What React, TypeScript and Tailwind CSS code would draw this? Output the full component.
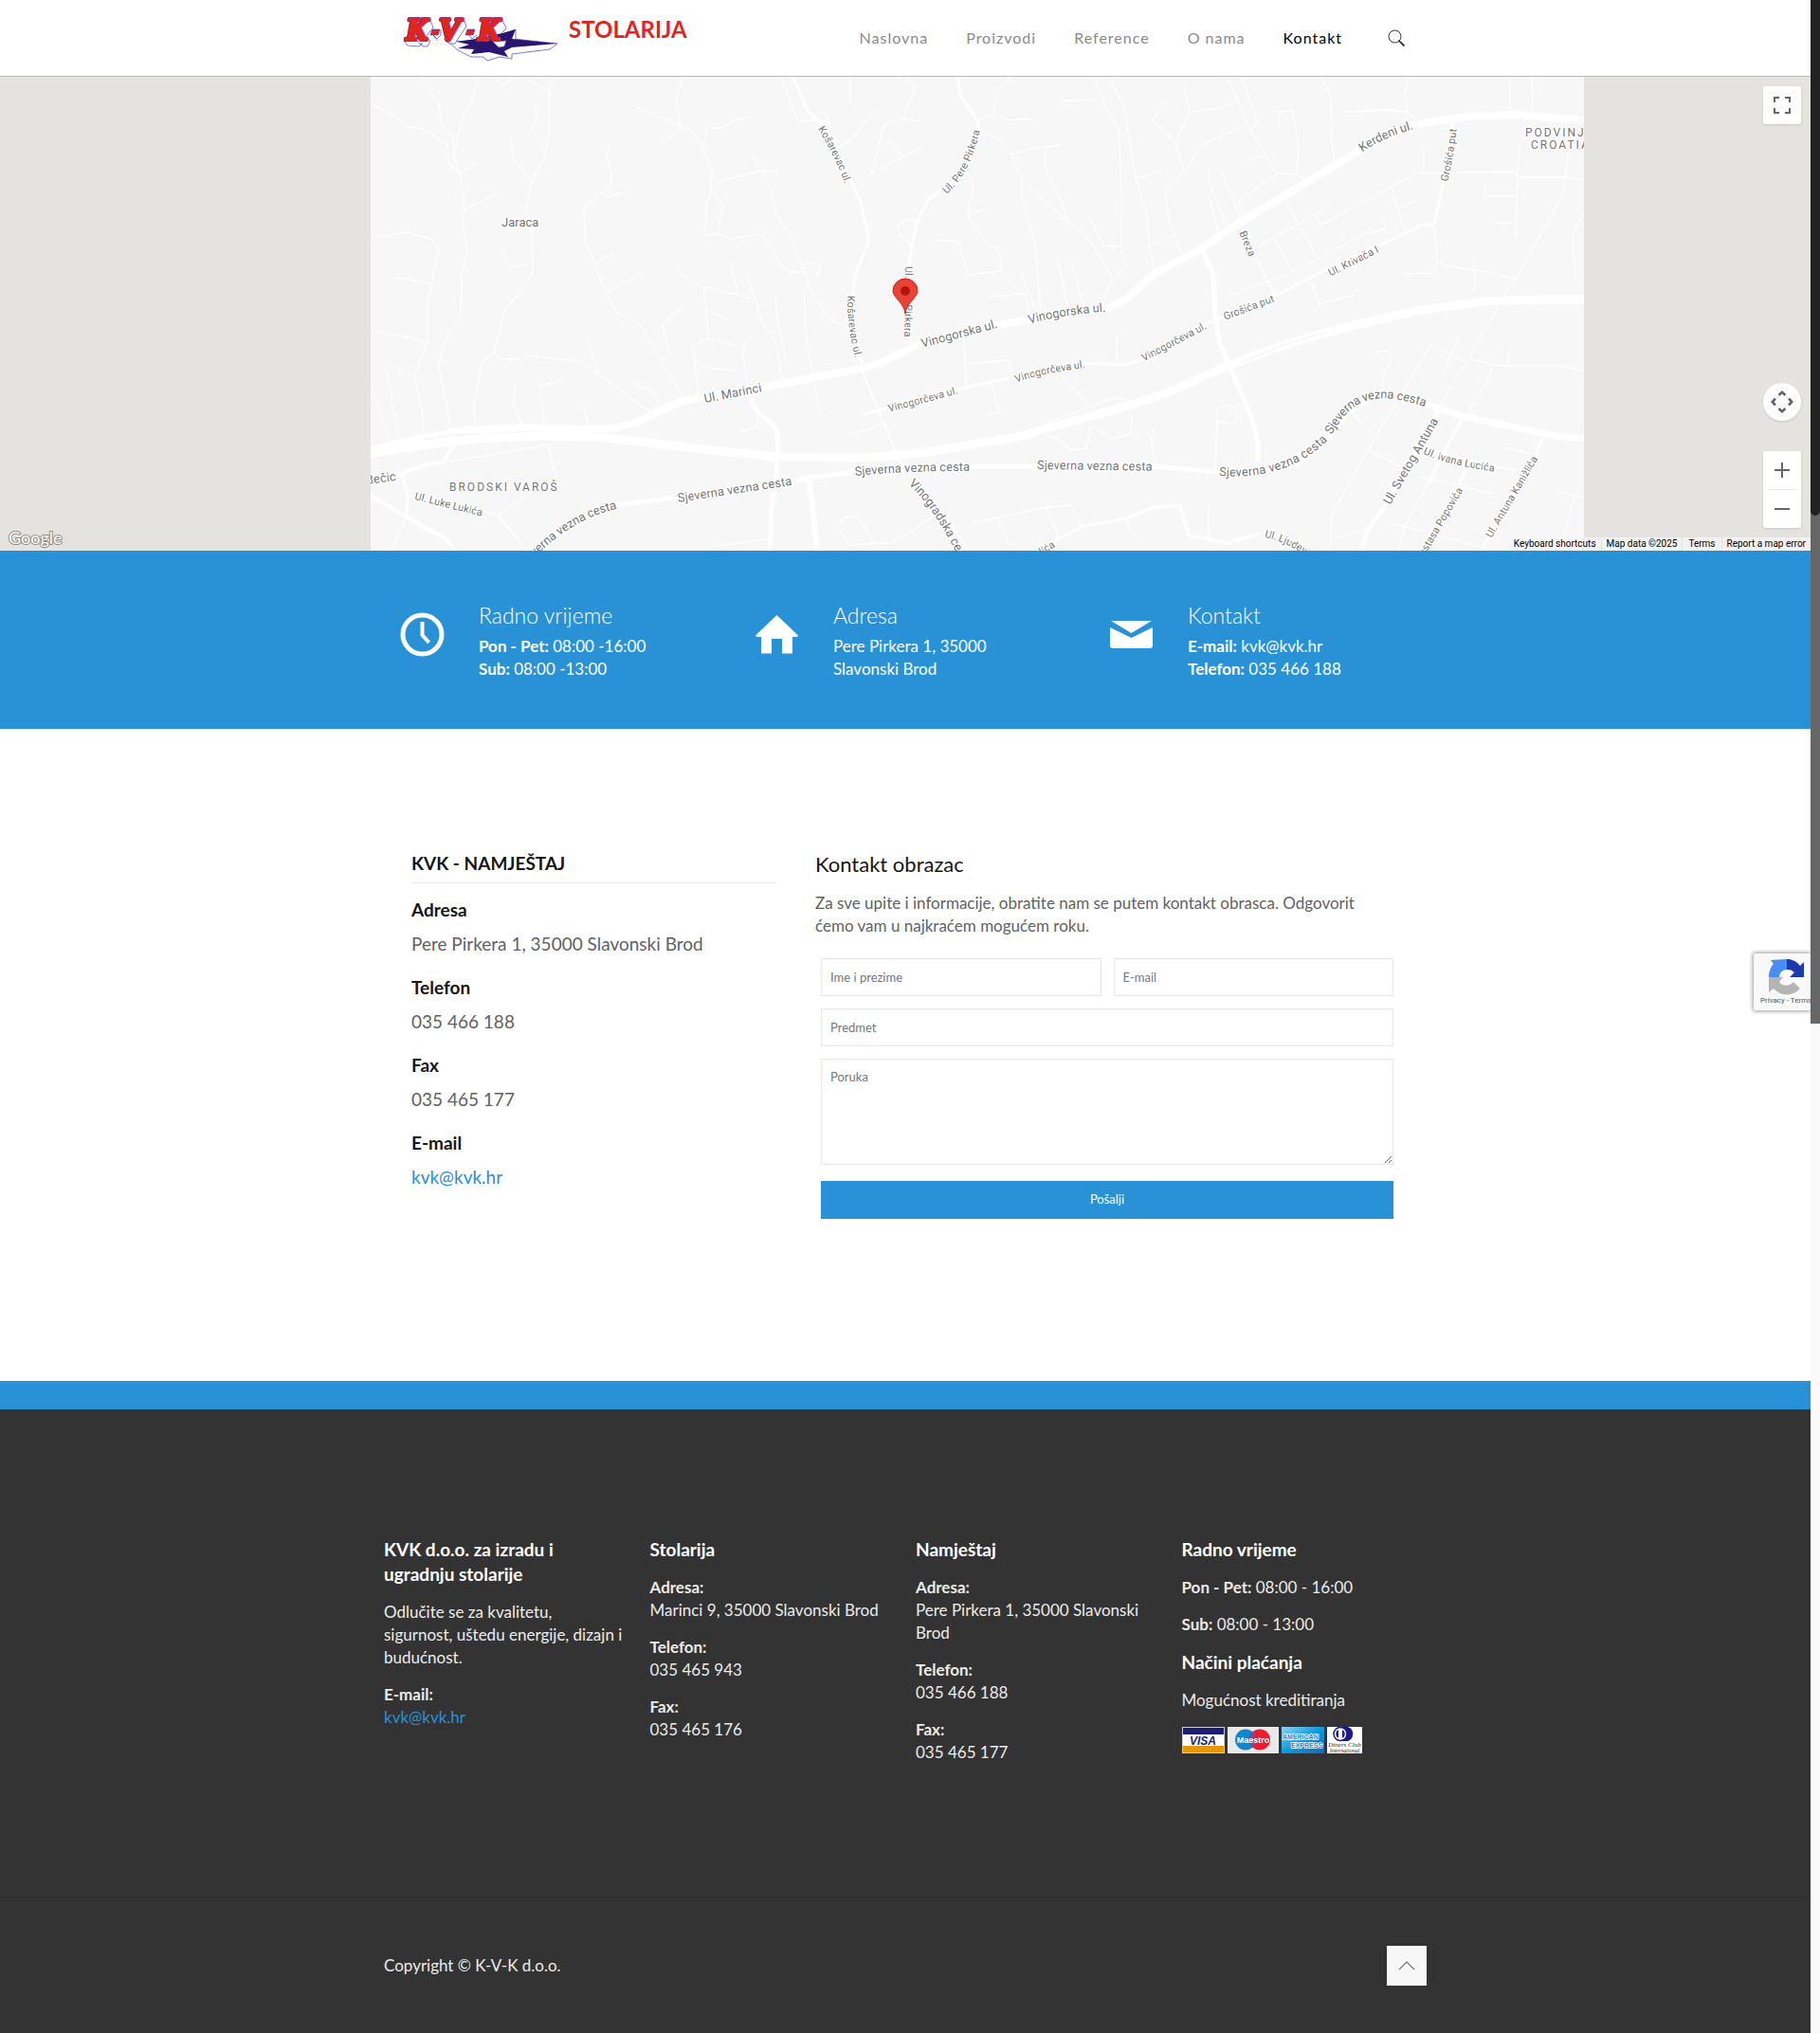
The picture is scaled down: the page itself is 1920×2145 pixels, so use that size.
import { ReactNode } from 'react';

const navItems = [
  { label: 'Naslovna', href: '#naslovna' },
  { label: 'Proizvodi', href: '#proizvodi' },
  { label: 'Reference', href: '#reference' },
  { label: 'O nama', href: '#o-nama' },
  { label: 'Kontakt', href: '#kontakt', active: true },
];

// [stroke width, polyline points]
const mainRoads: [number, string][] = [
  [8, '390,475 447,462 492,454 553,451 610,453 647,452 674,445 696,433 720,423 745,419 804,409 912,388 929,383 970,363 1052,343 1087,337 1169,325 1186,317 1219,288 1268,262 1304,237 1354,207 1411,173 1435,158 1490,132 1533,125 1560,122 1600,121 1633,124 1671,127'],
  [9, '390,479 443,470 500,463 574,460 643,462 725,472 819,482 908,483 974,478 1030,468 1074,461 1104,452 1191,428 1230,415 1295,386 1360,362 1421,345 1494,328 1564,318 1624,316 1671,316'],
  [5, '565,582 590,560 620,545 651,533 717,524 839,507 855,504 900,498 1027,492 1095,492 1217,492 1286,498 1330,498 1373,487 1403,460 1425,433 1455,417 1499,425'],
  [7, '1499,425 1546,440 1642,460 1671,463'],
  [5, '792,422 798,433 819,452 821,467 819,500 814,533 812,582'],
  [6, '853,503 857,533 862,582'],
  [5, '1268,262 1280,290 1282,330 1286,360 1299,390 1321,443 1327,467 1327,497'],
  [3, '837,82 851,115 868,133 896,187 908,213 917,253 902,290 898,330 906,373 911,388'],
  [2, '910,393 949,487 974,520 1002,553 1023,582'],
  [3, '1010,82 1013,100 1031,127 1033,137 1019,180 980,210 968,232 962,260 958,283 957,330 960,360'],
  [2, '968,232 957,232 947,238 949,247 962,260'],
  [3, '912,437 937,430 1000,413 1069,398 1143,383 1186,385 1204,380 1273,342 1282,337 1345,312 1398,285 1459,257 1502,237 1513,237 1523,190 1533,130'],
  [2, '1306,238 1325,270 1345,312'],
  [5, '1518,433 1490,483 1464,530 1442,560 1436,582'],
  [3, '1542,443 1520,483 1508,508'],
  [3, '1546,497 1529,533 1499,582'],
  [3, '1629,460 1620,480 1572,563 1562,582'],
  [2, '1503,473 1581,493 1611,498'],
  [4, '390,508 423,500 450,490 468,487 478,470 476,453'],
  [3, '423,500 430,520 429,545'],
  [4, '390,522 431,547 468,567 482,582'],
  [2, '431,523 525,543 557,582'],
  [3, '1091,582 1143,555 1189,547 1217,535 1245,533 1254,565 1295,573 1332,562 1377,582'],
];

const sideStreets = [
  '445,82 463,110 465,127 478,147 479,167 485,183 490,222 488,233 493,267 487,287 486,333 468,363 463,387 476,452',
  '390,108 421,125 429,133 447,137 472,153 474,173 485,183',
  '505,82 497,107 490,120 484,140 478,167',
  '580,82 579,143 574,167 561,190 555,222 561,240 562,287 552,303 531,330 528,347 521,372 508,383 500,427 501,450',
  '565,113 566,125 561,137 574,158',
  '539,145 541,167 561,190',
  '390,251 429,245 455,252 463,262 457,290 451,323 451,360 437,397 445,433 447,457',
  '417,293 456,299',
  '485,183 503,173',
  '490,222 524,203',
  '532,266 537,283 553,279',
  '524,82 530,91 540,82',
  '554,82 579,97',
  '719,82 713,107 718,133 729,138 741,155 751,182 750,200 763,217 757,247 772,252 802,247 812,257 823,280 833,287 849,287',
  '671,113 718,133 698,153',
  '741,155 746,135 761,135 775,127 790,123',
  '643,152 640,163 646,190 635,203 616,220 617,253 629,282 639,310 651,330 676,343 694,375 717,413',
  '635,203 639,208 660,203',
  '629,282 635,273 649,267',
  '639,310 678,287',
  '751,182 759,191 802,180 821,181',
  '794,164 814,203 819,227 835,250 849,287 855,307 870,330 880,340 894,345',
  '750,200 745,217 744,249 757,247',
  '849,278 862,278 865,284 861,294',
  '825,82 841,127 849,128 859,126 875,130 870,117',
  '957,82 965,93 953,125 932,132 921,180 906,202',
  '970,128 953,125',
  '921,118 898,147 884,157',
  '921,182 953,165 977,153',
  '953,165 940,150',
  '897,82 897,107',
  '712,279 721,292 743,303 778,311 797,316',
  '771,279 778,311',
  '787,287 797,316 804,340 819,363 825,400',
  '743,303 747,357 731,365 737,417',
  '745,327 768,337',
  '747,357 775,364',
  '732,380 748,388 780,391',
  '718,324 699,343 707,375 697,380',
  '786,363 783,372 792,422',
  '818,313 820,335 829,385',
  '848,313 851,360 865,437',
  '521,372 531,379 547,379 557,375 610,381 631,393 672,425 684,433',
  '619,357 631,393',
  '592,402 569,407 574,447',
  '544,407 541,425 550,447',
  '390,403 410,463',
  '407,387 412,413 420,460',
  '390,349 437,357 451,363',
  '421,390 437,397',
  '472,487 517,480 578,469 586,503',
  '525,543 560,520',
  '799,433 799,450 781,455',
  '670,404 676,409 688,412 696,427',
  '608,432 616,430 621,449',
  '412,582 429,545',
  '896,458 916,453 933,446',
  '750,577 807,569',
  '884,557 890,546 903,545 912,555 921,573 898,576 884,557',
  '921,573 940,573 962,560 988,542',
  '1066,82 1053,93 1048,120 1031,128',
  '1048,120 1066,127 1082,125 1090,127',
  '1033,137 1055,147 1067,163 1078,190 1078,210 1092,257 1098,330',
  '1067,163 1088,157 1119,153',
  '1102,155 1104,180 1119,210 1127,233 1114,229',
  '1086,198 1127,233 1149,253 1174,293',
  '1019,180 1027,197 1021,227 1037,253 1055,267 1057,287 1084,317 1086,330',
  '1021,227 1040,220',
  '986,253 1011,255 1021,290 1057,286',
  '1047,313 1084,309',
  '1078,290 1092,325',
  '1116,274 1127,327',
  '1130,276 1144,325',
  '1119,107 1151,105 1166,112 1180,137 1184,220 1182,260 1188,280 1170,300 1164,320',
  '1150,230 1164,259 1182,260',
  '1155,82 1166,112',
  '1170,82 1186,113 1198,188 1210,227 1213,263 1219,287',
  '1198,188 1225,181',
  '1210,260 1239,248',
  '1306,106 1284,114 1255,118 1240,150 1249,180 1257,170 1268,153 1317,130',
  '1249,90 1255,118',
  '1240,150 1216,126 1230,108',
  '1249,180 1229,200 1233,230 1245,265',
  '1294,82 1306,106 1321,140 1347,183 1370,184 1377,192',
  '1310,82 1327,128 1321,135',
  '1312,171 1333,164',
  '1347,183 1306,212 1318,235',
  '1349,132 1349,118 1364,117 1370,157 1368,184',
  '1394,82 1404,100 1405,147 1408,170',
  '1276,177 1276,193 1292,233',
  '1289,182 1309,230',
  '1277,213 1286,247',
  '1357,212 1390,273',
  '1345,253 1363,286',
  '1327,260 1402,218',
  '1386,227 1394,237 1468,197 1492,183 1520,182 1597,181 1601,187 1599,250',
  '1468,197 1482,247',
  '1475,219 1493,212',
  '1296,312 1359,289 1440,247 1462,241 1458,230',
  '1384,298 1391,321 1429,311',
  '1655,157 1649,205 1600,293 1580,323 1547,383 1533,403 1517,433',
  '1603,157 1600,187 1652,187 1671,189',
  '1513,237 1516,277 1512,288 1480,289',
  '1516,277 1540,283 1567,287 1600,295',
  '1555,272 1556,306',
  '1567,193 1566,207 1600,207',
  '1578,235 1599,235',
  '1547,383 1510,363 1480,413 1443,475 1405,542 1403,582',
  '1448,372 1465,370 1467,380 1458,400 1458,412',
  '1553,379 1575,385 1590,386 1647,386 1671,392',
  '1590,386 1593,369',
  '1575,385 1570,400 1550,433',
  '1540,352 1520,400',
  '1420,118 1460,116 1485,118 1482,100 1485,82',
  '1485,118 1494,126',
  '1593,82 1593,120',
  '1616,82 1617,121',
  '1502,155 1502,182',
  '1498,503 1575,521',
  '1587,472 1615,479',
  '1443,475 1490,498',
  '1508,507 1483,553 1475,582',
  '1468,552 1567,578',
  '1403,570 1440,558',
  '1671,225 1659,247 1662,293',
  '1646,519 1671,525',
  '1661,523 1650,567',
  '1217,454 1215,467 1219,487',
  '1282,497 1284,433 1293,427 1304,430 1304,447 1284,445',
  '1104,460 1115,462 1130,475 1145,473 1152,450 1173,463 1193,458 1195,440',
  '1104,446 1175,420 1190,422',
  '1026,552 1100,536 1130,533 1141,555',
  '1052,547 1069,582',
  '1104,535 1117,567',
  '1017,357 1019,408',
  '1019,384 1065,380 1068,398',
  '1117,393 1143,421',
  '1046,405 1054,434 1039,439',
  '1178,355 1178,385',
  '1189,547 1191,560 1199,566',
  '1275,535 1275,570',
  '1425,433 1437,447',
];

type MapLabel = { id: string; text: string; d: string; size: number; end?: boolean };

const streetLabels: MapLabel[] = [
  { id: 'kosarevac-1', text: 'Košarevac ul.', d: 'M866,134 Q886,164 899,204', size: 11 },
  { id: 'kosarevac-2', text: 'Košarevac ul.', d: 'M898,312 Q897,345 910,394', size: 11 },
  { id: 'pirkera-1', text: 'Ul. Pere Pirkera', d: 'M996,202 Q1024,178 1033,120', size: 11 },
  { id: 'pirkera-2', text: 'Ul. Pere Pirkera', d: 'M959,281 L958,380', size: 11 },
  { id: 'kerdeni', text: 'Kerdeni ul.', d: 'M1435,157 Q1462,138 1510,127', size: 13 },
  { id: 'grosica-1', text: 'Grošića put', d: 'M1523,191 Q1531,160 1534,120', size: 11 },
  { id: 'breza', text: 'Breza', d: 'M1311,244 L1330,290', size: 11 },
  { id: 'krivaca', text: 'Ul. Krivača I', d: 'M1402,288 L1470,254', size: 11 },
  { id: 'grosica-2', text: 'Grošića put', d: 'M1291,334 L1360,308', size: 11 },
  { id: 'vinogorceva-1', text: 'Vinogorčeva ul.', d: 'M937,431 L1030,406', size: 11 },
  { id: 'vinogorceva-2', text: 'Vinogorčeva ul.', d: 'M1071,400 Q1100,388 1165,382', size: 11 },
  { id: 'vinogorceva-3', text: 'Vinogorčeva ul.', d: 'M1205,378 L1290,333', size: 11 },
  { id: 'vinogorska-1', text: 'Vinogorska ul.', d: 'M972,363 L1070,337', size: 13 },
  { id: 'vinogorska-2', text: 'Vinogorska ul.', d: 'M1085,338 Q1120,327 1190,323', size: 13 },
  { id: 'marinci', text: 'Ul. Marinci', d: 'M743,421 L830,404', size: 13 },
  { id: 'sjeverna-1', text: 'Sjeverna vezna cesta', d: 'M532,620 Q585,547 650,533', size: 13, end: true },
  { id: 'sjeverna-2', text: 'Sjeverna vezna cesta', d: 'M715,526 L860,504', size: 13 },
  { id: 'sjeverna-3', text: 'Sjeverna vezna cesta', d: 'M902,498 Q960,492 1050,493', size: 13 },
  { id: 'sjeverna-4', text: 'Sjeverna vezna cesta', d: 'M1094,491 L1240,493', size: 13 },
  { id: 'sjeverna-5', text: 'Sjeverna vezna cesta', d: 'M1286,498 C1340,502 1380,485 1408,450', size: 13 },
  { id: 'sjeverna-6', text: 'Sjeverna vezna cesta', d: 'M1401,457 C1425,415 1450,404 1520,431', size: 13 },
  { id: 'svetog', text: 'Ul. Svetog Antuna', d: 'M1463,531 L1525,423', size: 13 },
  { id: 'lucica', text: 'Ul. Ivana Lucića', d: 'M1503,475 Q1525,487 1600,497', size: 11 },
  { id: 'popovica', text: 'Anastasa Popovića', d: 'M1486,608 L1540,515', size: 11, end: true },
  { id: 'kanizlica', text: 'Ul. Antuna Kanižlića', d: 'M1570,566 L1630,463', size: 11 },
  { id: 'ljudevita', text: 'Ul. Ljudevita', d: 'M1335,563 Q1358,567 1395,592', size: 11 },
  { id: 'dica', text: 'dića', d: 'M1094,584 L1125,565', size: 11 },
  { id: 'vinogradska', text: 'Vinogradska cesta', d: 'M961,508 Q996,540 1024,608', size: 13 },
  { id: 'lukica', text: 'Ul. Luke Lukića', d: 'M438,523 L530,546', size: 11 },
  { id: 'becic', text: 'Bečic', d: 'M386,507 L440,500', size: 13 },
];

function Logo() {
  return (
    <svg width="166" height="48" viewBox="0 0 166 48" role="img" aria-label="K-V-K" className="overflow-visible">
      <g fill="#fff" stroke="#5555dd" strokeWidth="0.8" strokeLinejoin="round">
        <path d="M48 28l10 9 14 7 13 0 4 4 13-4 13 2v-5l40-5 8-6-46-5z" />
        <path d="M119 15v12l-14-7z" />
        <path d="M28 3l4 10-8 10 5 4-3 6h-5l-6-6M1 27l4 5 12 1 4-4" />
        <path d="M31 20l5 5 4-4v-6M64 3l3 9-9 13-3 5h-6l-6-5M69 20l4 5 5-4" />
        <path d="M104 3l5 11-5 5 6 6-2 7h-7l-4-5" />
      </g>
      <path
        d="M57 28l20-3 28-6 14-4-4 10 48 5-48 4-8 4 4 6-20-5-19 2 3-5-17-1 12-4z"
        fill="#2a146e"
      />
      <path d="M32 22l5 5M95 28l6 6 6-1 2-6z" fill="#fff" stroke="#5555dd" strokeWidth="0.6" />
      <g
        fontFamily="'Liberation Serif', serif"
        fontWeight="bold"
        fontStyle="italic"
        fontSize="34"
        fill="#e0251f"
        strokeLinejoin="round"
        paintOrder="stroke"
      >
        <g stroke="#3b3bd0" strokeWidth="4">
          <text x="3" y="26">K</text>
          <text x="38" y="26">V</text>
          <text x="79" y="26">K</text>
        </g>
        <g stroke="#e0251f" strokeWidth="3">
          <text x="3" y="26" aria-hidden="true">K</text>
          <text x="38" y="26" aria-hidden="true">V</text>
          <text x="79" y="26" aria-hidden="true">K</text>
        </g>
      </g>
      <path d="M31 15h8l-2 6h-8zM68 15h8l-2 6h-8z" fill="#e0251f" stroke="#3b3bd0" strokeWidth="0.6" />
    </svg>
  );
}

function Header() {
  return (
    <header className="border-b border-[#b8b8b8] bg-white">
      <div className="mx-auto flex h-20 max-w-[1122px] items-center justify-between pr-[34px] pl-[31px]">
        <a href="#naslovna" className="flex h-12 items-start gap-[9px]">
          <Logo />
          <span className="text-2xl leading-[30px] font-bold text-[#e0251f]">STOLARIJA</span>
        </a>
        <div className="flex items-center gap-12">
          <nav className="flex gap-10 text-base tracking-[1px]">
            {navItems.map((item) => (
              <a key={item.label} href={item.href} className={item.active ? 'text-black' : 'text-[#8a8a8a]'}>
                {item.label}
              </a>
            ))}
          </nav>
          <button type="button" aria-label="Traži">
            <svg width="18" height="18" viewBox="0 0 18 18" fill="none" stroke="#333" className="block">
              <circle cx="7.5" cy="7.5" r="6.5" strokeWidth="1" />
              <path d="M12 12.2l5 4.8" strokeWidth="1.8" strokeLinecap="round" />
            </svg>
          </button>
        </div>
      </div>
    </header>
  );
}

function StreetMap() {
  return (
    <svg width="1280" height="500" viewBox="391 81 1280 500" className="block bg-[#f7f7f7]" aria-label="Karta">
      <g fill="none" stroke="#fff" strokeLinejoin="round" strokeLinecap="round">
        {sideStreets.map((points) => (
          <polyline key={points} points={points} strokeWidth="1.3" />
        ))}
        {mainRoads.map(([width, points]) => (
          <polyline key={points} points={points} strokeWidth={width} />
        ))}
      </g>
      <g fill="none" stroke="#f1f1f1" strokeWidth="1">
        <polyline points="447,464 476,459 500,458" />
        <polyline points="1310,382 1360,362 1400,350" />
      </g>
      <g
        fontFamily="Roboto, sans-serif"
        fill="#757575"
        stroke="#fff"
        strokeWidth="3"
        strokeLinejoin="round"
        paintOrder="stroke"
      >
        {streetLabels.map((label) => (
          <g key={label.id}>
            <path id={label.id} d={label.d} fill="none" stroke="none" />
            <text fontSize={label.size} dy="4">
              <textPath
                href={`#${label.id}`}
                startOffset={label.end ? '100%' : '0'}
                textAnchor={label.end ? 'end' : 'start'}
              >
                {label.text}
              </textPath>
            </text>
          </g>
        ))}
        <text x="529" y="239" fontSize="13">Jaraca</text>
        <g fontSize="12" letterSpacing="2">
          <text x="474" y="518">BRODSKI VAROŠ</text>
          <text x="1609" y="144">PODVINJ</text>
          <text x="1615" y="157">CROATIA</text>
        </g>
      </g>
      <path
        d="M955 331c-1-7-4-10-8-15-3-4-5-6-5-9a13 13 0 0 1 26 0c0 3-2 5-5 9-4 5-7 8-8 15z"
        fill="#ea4335"
        stroke="#c5221f"
        strokeWidth="1"
      />
      <circle cx="955" cy="307" r="5" fill="#b31412" />
    </svg>
  );
}

function MapSection() {
  return (
    <section className="relative h-[500px] overflow-hidden bg-[#e5e3df]">
      <div className="ml-[391px]">
        <StreetMap />
      </div>

      <svg width="62" height="24" viewBox="0 0 62 24" className="absolute bottom-0 left-[7px]" aria-label="Google">
        <text
          x="2"
          y="17"
          fontFamily="Lato, sans-serif"
          fontSize="18"
          fill="#fff"
          stroke="#8a8a8a"
          strokeWidth="2"
          paintOrder="stroke"
        >
          Google
        </text>
      </svg>

      <button
        type="button"
        aria-label="Cijeli zaslon"
        className="absolute top-[10px] right-[10px] flex size-10 items-center justify-center rounded-xs bg-white shadow"
      >
        <svg width="18" height="18" viewBox="0 0 18 18" fill="none" stroke="#666" strokeWidth="2">
          <path d="M1 6V1h5M12 1h5v5M17 12v5h-5M6 17H1v-5" />
        </svg>
      </button>

      <button
        type="button"
        aria-label="Pomakni kartu"
        className="absolute right-[10px] bottom-[137px] flex size-10 items-center justify-center rounded-full bg-white shadow"
      >
        <svg width="24" height="24" viewBox="0 0 24 24" fill="none" stroke="#666" strokeWidth="2.6">
          <path d="M8.5 5L12 1.8 15.5 5M8.5 19l3.500 3.200L15.500 19M5 8.500L1.800 12 5 15.500M19 8.500l3.200 3.500L19 15.500" />
        </svg>
      </button>

      <div className="absolute right-[10px] bottom-6 flex w-10 flex-col rounded-xs bg-white shadow">
        <button type="button" aria-label="Povećaj" className="flex h-10 items-center justify-center">
          <svg width="16" height="16" viewBox="0 0 16 16" stroke="#666" strokeWidth="2">
            <path d="M8 0v16M0 8h16" />
          </svg>
        </button>
        <div className="mx-[5px] h-px bg-[#e6e6e6]" />
        <button type="button" aria-label="Smanji" className="flex h-10 items-center justify-center">
          <svg width="16" height="16" viewBox="0 0 16 16" stroke="#666" strokeWidth="2">
            <path d="M0 8h16" />
          </svg>
        </button>
      </div>

      <div className="absolute right-0 bottom-0 flex h-[14px] divide-x divide-[#e0e0e0] bg-[#f5f5f5]/80 font-[Roboto,sans-serif] text-[10px] leading-[14px] text-black">
        <button type="button" className="px-[5px]">Keyboard shortcuts</button>
        <span className="px-[5px]">Map data ©2025</span>
        <a href="#terms" className="px-[6px]">Terms</a>
        <a href="#report" className="px-[5px]">Report a map error</a>
      </div>
    </section>
  );
}

function InfoItem({ icon, title, children }: { icon: ReactNode; title: string; children: ReactNode }) {
  return (
    <div className="flex pl-7">
      <div className="mt-3 mr-9 size-[47px] shrink-0">{icon}</div>
      <div>
        <h2 className="mb-[6px] text-[23px] leading-[30px] font-light">{title}</h2>
        <p>{children}</p>
      </div>
    </div>
  );
}

function InfoBar() {
  return (
    <section className="bg-[#2991d6] text-white">
      <div className="mx-auto grid max-w-[1122px] grid-cols-3 pt-[53px] pb-[51px] leading-6">
        <InfoItem
          title="Radno vrijeme"
          icon={
            <svg viewBox="0 0 47 47" fill="none" stroke="#fff">
              <circle cx="23.500" cy="23.500" r="20.500" strokeWidth="5" />
              <path d="M23.500 10v14l7 8" strokeWidth="4" />
            </svg>
          }
        >
          <b>Pon - Pet:</b> 08:00 -16:00
          <br />
          <b>Sub:</b> 08:00 -13:00
        </InfoItem>
        <InfoItem
          title="Adresa"
          icon={
            <svg viewBox="0 0 47 47" fill="#fff">
              <path d="M23.500 3L46 24.500 45 26h-5v17.500H29V28H18v15.500H7V26H2l-1-1.500z" />
            </svg>
          }
        >
          Pere Pirkera 1, 35000
          <br />
          Slavonski Brod
        </InfoItem>
        <InfoItem
          title="Kontakt"
          icon={
            <svg viewBox="0 0 47 47" fill="#fff">
              <path d="M2 9h43L23.500 22z" />
              <path d="M1 16l22.500 11L46 16v19a3 3 0 0 1-3 3H4a3 3 0 0 1-3-3z" />
            </svg>
          }
        >
          <b>E-mail:</b> kvk@kvk.hr
          <br />
          <b>Telefon:</b> 035 466 188
        </InfoItem>
      </div>
    </section>
  );
}

function ContactDetail({ label, children }: { label: string; children: ReactNode }) {
  return (
    <div className="mb-[18px]">
      <dt className="mb-2 font-bold text-[#161616]">{label}</dt>
      <dd>{children}</dd>
    </div>
  );
}

const fieldClass =
  'block w-full border border-[#e8e8e8] bg-white px-[9px] text-[13px] text-[#626262] shadow-[inset_0_0_2px_2px_rgba(0,0,0,0.02)] placeholder:text-[#777]';

function ContactForm() {
  return (
    <form className="mt-[22px] grid grid-cols-2 gap-x-[13px] gap-y-[13px] px-[6px]">
      <div>
        <label htmlFor="name" className="sr-only">Ime i prezime</label>
        <input id="name" type="text" placeholder="Ime i prezime" className={`${fieldClass} h-10`} />
      </div>
      <div>
        <label htmlFor="email" className="sr-only">E-mail</label>
        <input id="email" type="email" placeholder="E-mail" className={`${fieldClass} h-10`} />
      </div>
      <div className="col-span-2">
        <label htmlFor="subject" className="sr-only">Predmet</label>
        <input id="subject" type="text" placeholder="Predmet" className={`${fieldClass} h-10`} />
      </div>
      <div className="col-span-2">
        <label htmlFor="message" className="sr-only">Poruka</label>
        <textarea
          id="message"
          placeholder="Poruka"
          className={`${fieldClass} h-28 resize py-2 leading-5`}
        />
      </div>
      <button type="submit" className="col-span-2 mt-1 h-10 bg-[#2991d6] text-[13px] text-white">
        Pošalji
      </button>
    </form>
  );
}

function ContactSection() {
  return (
    <section className="bg-white text-[#626262]">
      <div className="mx-auto grid max-w-[1122px] grid-cols-[384px_1fr] gap-x-[42px] px-10 pt-[128px] pb-[171px]">
        <div className="text-[19px] leading-7">
          <h2 className="mb-[14px] border-b border-[#e8e8e8] pb-[6px] font-bold text-[#161616]">KVK - NAMJEŠTAJ</h2>
          <dl>
            <ContactDetail label="Adresa">Pere Pirkera 1, 35000 Slavonski Brod</ContactDetail>
            <ContactDetail label="Telefon">035 466 188</ContactDetail>
            <ContactDetail label="Fax">035 465 177</ContactDetail>
            <ContactDetail label="E-mail">
              <a href="mailto:kvk@kvk.hr" className="text-[#2991d6]">kvk@kvk.hr</a>
            </ContactDetail>
          </dl>
        </div>
        <div>
          <h2 className="mb-[14px] text-[22px] leading-[30px] text-[#161616]">Kontakt obrazac</h2>
          <p className="max-w-[600px] leading-6">
            Za sve upite i informacije, obratite nam se putem kontakt obrasca. Odgovorit ćemo vam u najkraćem mogućem
            roku.
          </p>
          <ContactForm />
        </div>
      </div>
    </section>
  );
}

function FooterHeading({ children }: { children: ReactNode }) {
  return <h3 className="mb-[15px] text-[19px] leading-[26px] font-bold text-white">{children}</h3>;
}

function PaymentCards() {
  return (
    <div className="mt-4 flex gap-[3px]">
      <svg width="45" height="28" viewBox="0 0 45 28" aria-label="Visa">
        <rect width="45" height="28" fill="#c9c9dc" />
        <rect x="1" y="1" width="43" height="26" fill="#fff" />
        <rect x="1" y="1" width="43" height="7" fill="#1a1f71" />
        <rect x="1" y="20" width="43" height="7" fill="#e79800" />
        <text x="22" y="18.500" textAnchor="middle" fontFamily="'Liberation Sans', sans-serif" fontSize="12" fontWeight="bold" fontStyle="italic" fill="#1a1f71">VISA</text>
      </svg>
      <svg width="54" height="28" viewBox="0 0 54 28" aria-label="Maestro">
        <rect width="54" height="28" fill="#e9e9e9" />
        <circle cx="19" cy="13.500" r="11" fill="#0c86d0" />
        <circle cx="34" cy="13.500" r="11" fill="#ec1c2e" />
        <path d="M26.500 5.500a11 11 0 0 1 0 16 11 11 0 0 1 0-16z" fill="#7b4a8c" />
        <text x="27" y="17" textAnchor="middle" fontFamily="'Liberation Sans', sans-serif" fontSize="9" fontWeight="bold" fill="#fff">Maestro</text>
      </svg>
      <svg width="45" height="28" viewBox="0 0 45 28" aria-label="American Express">
        <defs>
          <linearGradient id="amex" x1="0" y1="0" x2="1" y2="1">
            <stop offset="0" stopColor="#8fd3f2" />
            <stop offset="0.5" stopColor="#0f9ade" />
            <stop offset="1" stopColor="#1c66b0" />
          </linearGradient>
        </defs>
        <rect width="45" height="28" fill="url(#amex)" />
        <g fontFamily="'Liberation Sans', sans-serif" fontSize="7" fontWeight="bold" fill="#1b86cc" stroke="#fff" strokeWidth="1.500" paintOrder="stroke">
          <text x="1" y="13">AMERICAN</text>
          <text x="10" y="22">EXPRESS</text>
        </g>
      </svg>
      <svg width="37" height="28" viewBox="0 0 37 28" aria-label="Diners Club International">
        <rect width="37" height="28" fill="#fff" />
        <path d="M14 0h8a8 8 0 0 1 0 15h-8z" fill="#1f1a8c" />
        <circle cx="14" cy="7.500" r="7" fill="#fff" stroke="#1f1a8c" strokeWidth="1.500" />
        <path d="M12 3a5 5 0 0 0 0 9zM16 3a5 5 0 0 1 0 9z" fill="#1f1a8c" />
        <g fontFamily="'Liberation Serif', serif" fontStyle="italic" fill="#222" textAnchor="middle">
          <text x="18.500" y="21" fontSize="7">Diners Club</text>
          <text x="18.500" y="26.500" fontSize="6">International</text>
        </g>
      </svg>
    </div>
  );
}

function Footer() {
  return (
    <footer className="border-t-[30px] border-[#2991d6] bg-[#333] leading-6 text-[#ebebeb]">
      <div className="mx-auto grid max-w-[1122px] grid-cols-4 pt-[135px] pb-[125px] [&_p]:mb-[15px] [&>div]:px-[11px]">
        <div>
          <FooterHeading>KVK d.o.o. za izradu i<br />ugradnju stolarije</FooterHeading>
          <p>Odlučite se za kvalitetu,<br />sigurnost, uštedu energije, dizajn i budućnost.</p>
          <p>
            <b>E-mail:</b>
            <br />
            <a href="mailto:kvk@kvk.hr" className="text-[#2991d6]">kvk@kvk.hr</a>
          </p>
        </div>
        <div>
          <FooterHeading>Stolarija</FooterHeading>
          <p><b>Adresa:</b><br />Marinci 9, 35000 Slavonski Brod</p>
          <p><b>Telefon:</b><br />035 465 943</p>
          <p><b>Fax:</b><br />035 465 176</p>
        </div>
        <div>
          <FooterHeading>Namještaj</FooterHeading>
          <p><b>Adresa:</b><br />Pere Pirkera 1, 35000 Slavonski<br />Brod</p>
          <p><b>Telefon:</b><br />035 466 188</p>
          <p><b>Fax:</b><br />035 465 177</p>
        </div>
        <div>
          <FooterHeading>Radno vrijeme</FooterHeading>
          <p><b>Pon - Pet:</b> 08:00 - 16:00</p>
          <p><b>Sub:</b> 08:00 - 13:00</p>
          <FooterHeading>Načini plaćanja</FooterHeading>
          <p>Mogućnost kreditiranja</p>
          <PaymentCards />
        </div>
      </div>
      <div className="border-t border-[#2d2d2d]">
        <div className="mx-auto flex max-w-[1122px] items-center justify-between px-[11px] pt-[51px] pb-[50px]">
          <p>Copyright © K-V-K d.o.o.</p>
          <button
            type="button"
            aria-label="Na vrh"
            className="flex size-[42px] items-center justify-center bg-[#f7f7f7]"
          >
            <svg width="18" height="10" viewBox="0 0 18 10" fill="none" stroke="#777" strokeWidth="1.2">
              <path d="M1 9l8-8 8 8" />
            </svg>
          </button>
        </div>
      </div>
    </footer>
  );
}

function RecaptchaBadge() {
  return (
    <aside className="absolute top-[1006px] right-0 h-[60px] w-[60px] overflow-hidden rounded-l-xs bg-[#f9f9f9] pt-[6px] pl-4 shadow-[0_0_4px_1px_#999] [clip-path:inset(-6px_0_-6px_-6px)]">
      <svg width="38" height="38" viewBox="0 0 38 38">
        <path d="M19 0v11a8 8 0 0 0-8 8H0C0 13 2 8 5 5L2 1z" fill="#4a8cf5" />
        <path d="M19 0c6 0 11 3 14 7l4-4v16H22l5-5a9 9 0 0 0-8-3z" fill="#1c3aa9" />
        <path d="M0 19h15l-4 5c3 5 11 5 15 0l7 7c-8 9-21 8-28 0l-5 4z" fill="#b5b5b5" />
      </svg>
      <div className="-ml-[9px] font-[Roboto,sans-serif] text-[8px] leading-3 whitespace-nowrap text-[#555]">
        Privacy - Terms
      </div>
    </aside>
  );
}

export default function App() {
  return (
    <div className="flex bg-[#fafafa] font-[Lato,sans-serif] text-[17px]">
      <div className="relative min-w-0 flex-1">
        <Header />
        <main>
          <MapSection />
          <InfoBar />
          <ContactSection />
        </main>
        <Footer />
        <RecaptchaBadge />
      </div>
      <div className="h-[1080px] w-[10px] shrink-0 bg-[#666]">
        <div className="h-[544px] rounded-b-full bg-[#222]" />
      </div>
    </div>
  );
}
